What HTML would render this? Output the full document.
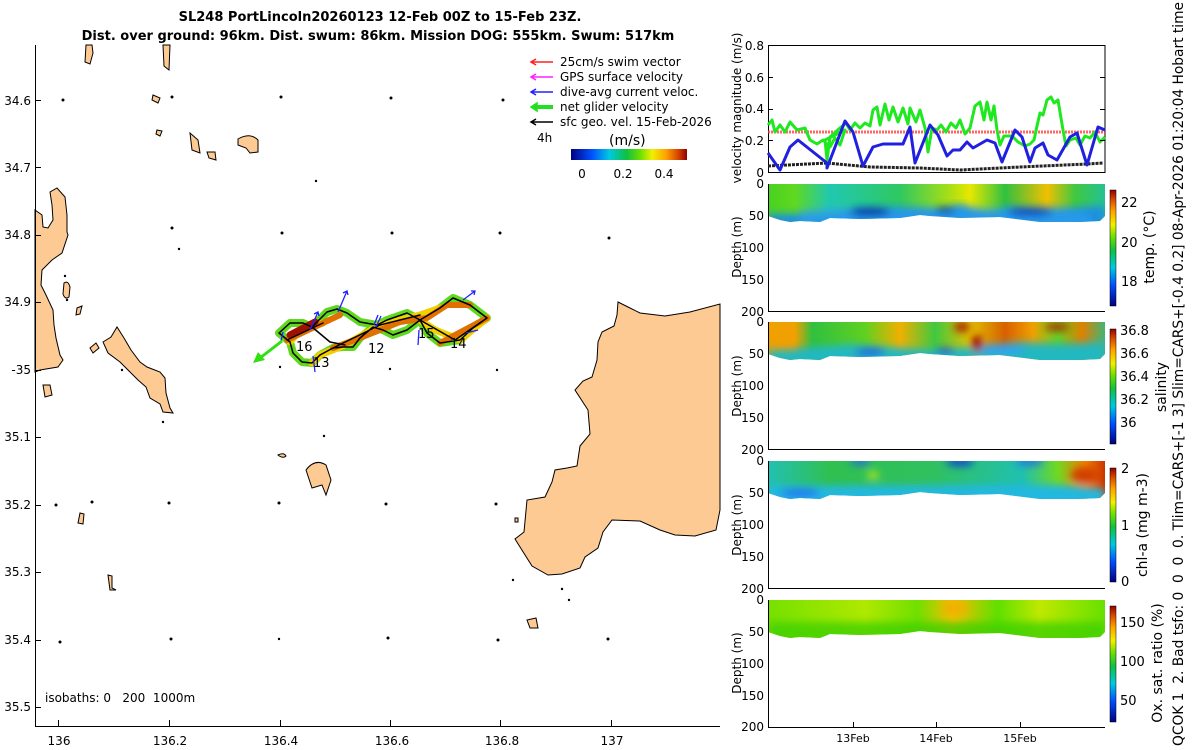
<!DOCTYPE html>
<html><head><meta charset="utf-8"><style>
html,body{margin:0;padding:0;background:#fff;}
svg{display:block;font-family:"DejaVu Sans","Liberation Sans",sans-serif;}
</style></head><body>
<svg width="1200" height="750" viewBox="0 0 1200 750" xmlns="http://www.w3.org/2000/svg">
<defs>
<linearGradient id="jet" x1="0" y1="0" x2="1" y2="0">
<stop offset="0" stop-color="#000080"/><stop offset="0.18" stop-color="#0050ff"/><stop offset="0.33" stop-color="#00c8e0"/><stop offset="0.48" stop-color="#10c040"/><stop offset="0.6" stop-color="#70e000"/><stop offset="0.7" stop-color="#f0f000"/><stop offset="0.82" stop-color="#ffa000"/><stop offset="0.92" stop-color="#d84800"/><stop offset="1" stop-color="#900000"/>
</linearGradient>
<linearGradient id="jetv" x1="0" y1="1" x2="0" y2="0">
<stop offset="0" stop-color="#000080"/><stop offset="0.18" stop-color="#0050ff"/><stop offset="0.33" stop-color="#00c8e0"/><stop offset="0.48" stop-color="#10c040"/><stop offset="0.6" stop-color="#70e000"/><stop offset="0.7" stop-color="#f0f000"/><stop offset="0.82" stop-color="#ffa000"/><stop offset="0.92" stop-color="#d84800"/><stop offset="1" stop-color="#900000"/>
</linearGradient>
<filter id="bl" x="-5%" y="-20%" width="110%" height="140%"><feGaussianBlur stdDeviation="4"/></filter>
<linearGradient id="tT" x1="0" x2="1"><stop offset="0" stop-color="#40d020"/><stop offset="0.1" stop-color="#60d820"/><stop offset="0.2" stop-color="#20c8b0"/><stop offset="0.4" stop-color="#30c860"/><stop offset="0.55" stop-color="#b0e010"/><stop offset="0.6" stop-color="#e8e800"/><stop offset="0.7" stop-color="#30c040"/><stop offset="0.82" stop-color="#f0c000"/><stop offset="0.9" stop-color="#40c840"/><stop offset="1" stop-color="#20c0a0"/></linearGradient>
<linearGradient id="tS" x1="0" x2="1"><stop offset="0" stop-color="#f0a000"/><stop offset="0.1" stop-color="#f0a000"/><stop offset="0.15" stop-color="#30c040"/><stop offset="0.3" stop-color="#60d020"/><stop offset="0.4" stop-color="#f0b000"/><stop offset="0.5" stop-color="#40c840"/><stop offset="0.6" stop-color="#e0c000"/><stop offset="0.7" stop-color="#d86000"/><stop offset="0.78" stop-color="#f0a000"/><stop offset="0.85" stop-color="#60d020"/><stop offset="0.92" stop-color="#e08000"/><stop offset="1" stop-color="#20c090"/></linearGradient>
<linearGradient id="tC" x1="0" x2="1"><stop offset="0" stop-color="#20c0c0"/><stop offset="0.2" stop-color="#30c050"/><stop offset="0.5" stop-color="#30c060"/><stop offset="0.75" stop-color="#20c0b0"/><stop offset="0.85" stop-color="#70d820"/><stop offset="0.93" stop-color="#f08000"/><stop offset="1" stop-color="#c02000"/></linearGradient>
<linearGradient id="tO" x1="0" x2="1"><stop offset="0" stop-color="#70e000"/><stop offset="0.3" stop-color="#b0e800"/><stop offset="0.45" stop-color="#70e000"/><stop offset="0.55" stop-color="#f0c000"/><stop offset="0.68" stop-color="#60e000"/><stop offset="0.8" stop-color="#c0e800"/><stop offset="1" stop-color="#60e000"/></linearGradient>
<clipPath id="c1"><path d="M768,0 L1105,0 L1105,32 L1100,37 L1080,38 L1040,38 L1000,33 L960,34 L930,32 L920,31 L900,34 L860,35 L830,34 L820,38 L800,37 L790,38 L780,36 L768,32 Z"/></clipPath>
</defs>

<text x="380" y="21" font-size="13" font-weight="bold" text-anchor="middle">SL248 PortLincoln20260123 12-Feb 00Z to 15-Feb 23Z.</text>
<text x="378" y="40" font-size="13" font-weight="bold" text-anchor="middle">Dist. over ground: 96km. Dist. swum: 86km. Mission DOG: 555km. Swum: 517km</text>

<g fill="#fdca94" stroke="#000" stroke-width="1">
<path d="M618,302 L630,308 L640,313 L665,316 L690,312 L720,304 L720,510 L716,530 L695,536 L675,535 L660,530 L640,521 L612,520 L603,532 L598,548 L585,557 L580,568 L562,574 L548,575 L532,566 L515,539 L524,532 L527,500 L545,497 L552,482 L555,470 L567,468 L577,466 L580,446 L590,434 L588,410 L575,390 L583,381 L592,377 L597,360 L598,342 L602,332 L614,326 L617,315 Z"/>
<path d="M35,210 L42,215 L43,227 L48,228 L53,220 L52,205 L50,192 L57,188 L65,197 L67,215 L67,232 L68,235 L62,253 L52,260 L42,270 L41,285 L46,295 L53,310 L54,325 L56,338 L60,355 L63,360 L58,367 L40,370 L35,372 Z"/>
<path d="M103,342 L111,337 L117,327 L124,338 L131,350 L140,362 L147,367 L160,372 L165,378 L166,393 L170,408 L173,413 L163,412 L160,404 L150,398 L146,387 L138,380 L130,372 L120,362 L108,353 Z"/>
<path d="M64,283 Q68,280 70,287 L69,297 Q65,300 63,294 Z"/>
<path d="M77,308 L82,306 L80,314 L76,315 Z"/>
<path d="M90,348 L96,343 L99,348 L93,353 Z"/>
<path d="M43,385 L50,385 L52,395 L45,397 Z"/>
<path d="M306,470 Q315,458 326,465 L331,480 L326,495 L322,485 L312,488 Z"/>
<path d="M80,513 L84,514 L83,524 L78,523 Z"/>
<path d="M108,575 L112,576 L112,588 L116,590 L110,590 Z"/>
<path d="M278,455 Q284,452 286,456 Q283,459 278,455 Z"/>
<path d="M527,620 L536,618 L538,628 L530,628 Z"/>
<path d="M515,518 L518,518 L518,522 L515,522 Z"/>
<path d="M86,45 L92,45 L93,53 L90,64 L85,62 Z"/>
<path d="M163,45 L170,45 L169,70 L164,66 Z"/>
<path d="M190,133 L198,140 L200,153 L192,150 Z"/>
<path d="M238,139 Q250,132 258,140 L258,152 L250,153 L246,148 L238,145 Z"/>
<path d="M207,152 L215,152 L216,160 L209,158 Z"/>
<path d="M153,95 L160,98 L158,103 L152,100 Z"/>
<path d="M157,130 L162,131 L160,136 L156,134 Z"/>
</g>
<g fill="#000">
<circle cx="63" cy="100" r="1.5"/><circle cx="172" cy="97" r="1.5"/><circle cx="281" cy="97" r="1.5"/><circle cx="391" cy="98" r="1.5"/><circle cx="503" cy="100" r="1.5"/><circle cx="316" cy="181" r="1.2"/><circle cx="172" cy="228" r="1.5"/><circle cx="179" cy="249" r="1.2"/><circle cx="282" cy="233" r="1.5"/><circle cx="392" cy="233" r="1.5"/><circle cx="500" cy="233" r="1.5"/><circle cx="609" cy="238" r="1.5"/><circle cx="65" cy="276" r="1.2"/><circle cx="67" cy="300" r="1.2"/><circle cx="122" cy="370" r="1.2"/><circle cx="163" cy="422" r="1.2"/><circle cx="92" cy="502" r="1.5"/><circle cx="56" cy="505" r="1.5"/><circle cx="169" cy="503" r="1.5"/><circle cx="279" cy="503" r="1.5"/><circle cx="386" cy="504" r="1.5"/><circle cx="496" cy="504" r="1.5"/><circle cx="60" cy="642" r="1.5"/><circle cx="171" cy="639" r="1.5"/><circle cx="279" cy="639" r="1.2"/><circle cx="388" cy="638" r="1.5"/><circle cx="498" cy="640" r="1.5"/><circle cx="608" cy="639" r="1.5"/><circle cx="562" cy="589" r="1.2"/><circle cx="569" cy="600" r="1.2"/><circle cx="513" cy="580" r="1.2"/><circle cx="324" cy="436" r="1.2"/><circle cx="280" cy="367" r="1.2"/><circle cx="390" cy="369" r="1.2"/><circle cx="497" cy="370" r="1.2"/>
</g>

<g fill="none" stroke-linejoin="round" stroke-linecap="round">
<path d="M279,333 L290,323 L303,323 L312,327 L327,312 L337,309 L347,313 L360,322 L377,325 L387,320 L407,313 L420,320 L440,308 L453,298 L470,305 L487,318 L473,328 L460,340 L440,343 L427,333 L420,320 L407,330 L393,335 L383,330 L373,327 L360,338 L353,347 L343,347 L333,348 L320,355 L312,363 L302,362 L293,353 L290,342 L279,333" stroke="#60d820" stroke-width="8"/>
<path d="M290,342 L300,330 L323,323 M312,363 L320,355 L345,345 L380,325 L420,315 L440,308 M420,320 L435,330 L460,340 L487,318" stroke="#f0d000" stroke-width="7"/>
<path d="M287,340 L323,323 L340,315 M333,348 L360,338 L400,322 L427,318 L447,305 L470,305 M440,343 L487,318" stroke="#e07000" stroke-width="6"/>
<path d="M290,335 L315,322" stroke="#a01000" stroke-width="7"/>
<path d="M279,333 L290,323 L303,323 L312,327 L327,312 L337,309 L347,313 L360,322 L377,325 L387,320 L407,313 L420,320 L440,308 L453,298 L470,305 L487,318 L473,328 L460,340 L440,343 L427,333 L420,320 L407,330 L393,335 L383,330 L373,327 L360,338 L353,347 L343,347 L333,348 L320,355 L312,363 L302,362 L293,353 L290,342 L279,333 M287,340 L323,323 M312,327 L330,342 L345,345 M333,348 L380,325 L420,315 M420,320 L455,340 L487,318" stroke="#000" stroke-width="1.5"/>
</g>
<g stroke="#2020ff" stroke-width="1.3" fill="none">
<path d="M310,330 L318,312 M314,314 L318,312 L319,316"/><path d="M338,312 L347,291 M343,293 L347,291 L348,295"/><path d="M313,356 L315,372"/><path d="M374,325 L378,315"/><path d="M376,327 L381,316"/><path d="M463,300 L475,291 M471,291 L475,291 L474,295"/><path d="M466,333 L478,330"/><path d="M419,330 L418,345"/><path d="M283,332 L281,341"/>
</g>
<path d="M282,341 L260,358" stroke="#30e010" stroke-width="3"/>
<path d="M253,363 L258,352 L265,360 Z" fill="#30e010"/>
<g font-size="13" fill="#000">
<text x="296" y="351">16</text><text x="313" y="367">13</text><text x="368" y="353">12</text><text x="418" y="338">15</text><text x="450" y="348">14</text>
</g>

<g stroke-width="1.5" fill="none">
<path d="M531,62 L553,62 M536,59 L531,62 L536,65" stroke="#ff2020"/>
<path d="M531,77 L553,77 M536,74 L531,77 L536,80" stroke="#ff20ff"/>
<path d="M531,92 L553,92 M536,89 L531,92 L536,95" stroke="#2020ff"/>
<path d="M533,107 L553,107" stroke="#20e020" stroke-width="4"/>
<path d="M531,107 L537,103 L537,111 Z" fill="#20e020" stroke="#20e020"/>
<path d="M531,122 L553,122 M536,119 L531,122 L536,125" stroke="#000"/>
</g>
<g font-size="12">
<text x="560" y="66">25cm/s swim vector</text><text x="560" y="81">GPS surface velocity</text><text x="560" y="96">dive-avg current veloc.</text><text x="560" y="111">net glider velocity</text><text x="560" y="126">sfc geo. vel. 15-Feb-2026</text>
<text x="537" y="142">4h</text>
</g>
<text x="609" y="145" font-size="14">(m/s)</text>
<rect x="571" y="149" width="116" height="11" fill="url(#jet)"/>
<g font-size="12" text-anchor="middle"><text x="582" y="178">0</text><text x="623" y="178">0.2</text><text x="664" y="178">0.4</text></g>

<path d="M35.5,45 L35.5,726.5 L720,726.5" fill="none" stroke="#000" stroke-width="1"/>
<g stroke="#000">
<path d="M35,100.5h6M35,167.5h6M35,235.5h6M35,302.5h6M35,370.5h6M35,437.5h6M35,505.5h6M35,572.5h6M35,640.5h6M35,707.5h6"/>
<path d="M58.5,726v-6M169.5,726v-6M280.5,726v-6M390.5,726v-6M500.5,726v-6M611.5,726v-6"/>
</g>
<g font-size="12" text-anchor="end">
<text x="31" y="105">34.6</text><text x="31" y="172">34.7</text><text x="31" y="239">34.8</text><text x="31" y="306">34.9</text><text x="31" y="374">-35</text><text x="31" y="441">35.1</text><text x="31" y="509">35.2</text><text x="31" y="576">35.3</text><text x="31" y="644">35.4</text><text x="31" y="711">35.5</text>
</g>
<g font-size="12" text-anchor="middle">
<text x="59" y="745">136</text><text x="170" y="745">136.2</text><text x="281" y="745">136.4</text><text x="392" y="745">136.6</text><text x="502" y="745">136.8</text><text x="612" y="745">137</text>
</g>
<text x="45" y="702" font-size="12" xml:space="preserve">isobaths: 0   200  1000m</text>

<rect x="768.5" y="45.5" width="336.5" height="127" fill="none" stroke="#000"/>
<path d="M768,132 L1105,132" stroke="#ff4040" stroke-width="3" stroke-dasharray="2,1" opacity="0.8"/>
<polyline fill="none" stroke="#222" stroke-width="3" stroke-dasharray="3,1" points="768,166 827,163 870,167 920,168 960,170 1020,167 1087,164 1103,163"/>
<polyline fill="none" stroke="#20e820" stroke-width="3" stroke-linejoin="round" points="768,125 772,120 775,132 780,125 785,132 790,122 797,130 805,128 810,140 817,144 823,140 830,147 835,138 840,145 845,130 825,140 827,160 830,137 840,128 846,123 850,130 855,123 860,128 865,123 870,126 873,110 877,107 880,125 885,104 889,120 893,107 898,122 903,108 908,124 910,108 916,122 920,110 925,128 928,152 932,128 937,130 941,125 946,132 951,123 956,128 960,120 965,134 970,128 975,106 980,102 984,120 987,102 991,120 994,106 997,130 1000,145 1004,136 1012,136 1018,142 1025,146 1030,144 1034,140 1037,126 1040,113 1043,115 1047,100 1051,97 1054,103 1058,100 1063,130 1066,146 1070,140 1076,138 1080,145 1085,136 1090,138 1095,132 1100,142 1105,137"/>
<polyline fill="none" stroke="#2020e0" stroke-width="3" stroke-linejoin="round" points="768,153 780,170 790,147 798,140 827,163 827,168 845,121 853,132 863,166 873,147 883,144 903,144 910,127 915,163 930,125 938,135 947,156 953,150 960,150 967,142 973,148 987,140 995,143 1002,162 1015,130 1022,137 1030,162 1035,148 1043,143 1048,155 1057,160 1070,137 1077,133 1087,165 1098,127 1105,130"/>
<g stroke="#000"><path d="M768,45.5h5M768,77.5h5M768,109.5h5M768,140.5h5M1105,45.5h-5M1105,77.5h-5M1105,109.5h-5M1105,140.5h-5"/></g>
<g font-size="12" text-anchor="end"><text x="764" y="50">0.8</text><text x="764" y="82">0.6</text><text x="764" y="113">0.4</text><text x="764" y="145">0.2</text><text x="764" y="177">0</text></g>
<text transform="translate(741,108) rotate(-90)" font-size="12" text-anchor="middle">velocity magnitude (m/s)</text>

<g transform="translate(0,184)">
<g clip-path="url(#c1)"><rect x="760" y="-4" width="350" height="50" fill="url(#tT)"/>
<g filter="url(#bl)"><path d="M768,30 L830,30 L860,22 L940,24 L960,20 L990,28 L1010,22 L1060,24 L1105,22 L1105,45 L768,45 Z" fill="#1a90e0"/><path d="M800,26 L830,24 L860,25 L900,26 L1000,24 L1040,26 L1070,26 L1090,30 L1090,45 L800,45Z" fill="#30a0f0" opacity="0.6"/><ellipse cx="870" cy="28" rx="20" ry="4" fill="#0028a0"/><ellipse cx="1030" cy="28" rx="22" ry="4" fill="#1040c0"/><ellipse cx="945" cy="26" rx="10" ry="3" fill="#0030b0"/></g></g>
<path d="M768.5,0 V127.5 H1105" fill="none" stroke="#000"/>
</g>
<g transform="translate(0,322)">
<g clip-path="url(#c1)"><rect x="760" y="-4" width="350" height="50" fill="url(#tS)"/>
<g filter="url(#bl)"><path d="M768,28 L790,28 L800,26 L850,22 L880,24 L900,26 L940,28 L980,24 L1020,20 L1060,22 L1105,20 L1105,45 L768,45 Z" fill="#20b8c0"/><ellipse cx="870" cy="30" rx="15" ry="4" fill="#2060e0"/><ellipse cx="945" cy="29" rx="10" ry="3" fill="#2050e0"/><ellipse cx="1000" cy="27" rx="25" ry="5" fill="#30a0f0"/><ellipse cx="977" cy="22" rx="6" ry="8" fill="#a00000"/><ellipse cx="962" cy="5" rx="8" ry="5" fill="#b02000"/><ellipse cx="1057" cy="5" rx="12" ry="4" fill="#b03000"/></g></g>
<path d="M768.5,0 V127.5 H1105" fill="none" stroke="#000"/>
</g>
<g transform="translate(0,461)">
<g clip-path="url(#c1)"><rect x="760" y="-4" width="350" height="50" fill="url(#tC)"/>
<g filter="url(#bl)"><path d="M768,25 L1060,24 L1105,28 L1105,45 L768,45 Z" fill="#20b8e0"/><ellipse cx="800" cy="32" rx="20" ry="4" fill="#2070f0"/><ellipse cx="960" cy="1" rx="14" ry="4" fill="#1040d0"/><ellipse cx="1030" cy="1" rx="14" ry="3" fill="#2060f0"/><ellipse cx="860" cy="1" rx="10" ry="3" fill="#2060f0"/><ellipse cx="1085" cy="14" rx="14" ry="8" fill="#d04000"/><ellipse cx="873" cy="14" rx="6" ry="3" fill="#d0f000"/></g></g>
<path d="M768.5,0 V127.5 H1105" fill="none" stroke="#000"/>
</g>
<g transform="translate(0,600)">
<g clip-path="url(#c1)"><rect x="760" y="-4" width="350" height="50" fill="url(#tO)"/>
<g filter="url(#bl)"><path d="M768,22 L1105,22 L1105,45 L768,45 Z" fill="#40d000" opacity="0.8"/><ellipse cx="955" cy="8" rx="14" ry="7" fill="#f0b000"/></g></g>
<path d="M768.5,0 V127.5 H1105" fill="none" stroke="#000"/>
</g>
<g font-size="12" text-anchor="end">
<text x="764" y="188">0</text><text x="764" y="220">50</text><text x="764" y="252">100</text><text x="764" y="284">150</text><text x="764" y="316">200</text>
<text x="764" y="326">0</text><text x="764" y="358">50</text><text x="764" y="390">100</text><text x="764" y="422">150</text><text x="764" y="454">200</text>
<text x="764" y="465">0</text><text x="764" y="497">50</text><text x="764" y="529">100</text><text x="764" y="561">150</text><text x="764" y="593">200</text>
<text x="764" y="604">0</text><text x="764" y="636">50</text><text x="764" y="668">100</text><text x="764" y="700">150</text><text x="764" y="731">200</text>
</g>
<g font-size="12" text-anchor="middle">
<text transform="translate(741,247) rotate(-90)">Depth (m)</text><text transform="translate(741,386) rotate(-90)">Depth (m)</text><text transform="translate(741,525) rotate(-90)">Depth (m)</text><text transform="translate(741,663) rotate(-90)">Depth (m)</text>
</g>
<g stroke="#000"><path d="M853.5,727v-5M936.5,727v-5M1020.5,727v-5"/></g>
<g font-size="11" text-anchor="middle"><text x="853" y="742">13Feb</text><text x="936" y="742">14Feb</text><text x="1020" y="742">15Feb</text></g>

<rect x="1110" y="190" width="6" height="116" fill="url(#jetv)" stroke="#000" stroke-width="0.5"/>
<rect x="1110" y="329" width="6" height="115" fill="url(#jetv)" stroke="#000" stroke-width="0.5"/>
<rect x="1110" y="468" width="6" height="114" fill="url(#jetv)" stroke="#000" stroke-width="0.5"/>
<rect x="1110" y="606" width="6" height="116" fill="url(#jetv)" stroke="#000" stroke-width="0.5"/>
<g font-size="13">
<text x="1121" y="207">22</text><text x="1121" y="247">20</text><text x="1121" y="286">18</text>
<text x="1120" y="335">36.8</text><text x="1120" y="358">36.6</text><text x="1120" y="381">36.4</text><text x="1120" y="404">36.2</text><text x="1120" y="427">36</text>
<text x="1121" y="473">2</text><text x="1121" y="530">1</text><text x="1121" y="586">0</text>
<text x="1120" y="627">150</text><text x="1120" y="666">100</text><text x="1120" y="705">50</text>
</g>
<g font-size="14" text-anchor="middle">
<text transform="translate(1154,247) rotate(-90)">temp. (°C)</text>
<text transform="translate(1166,387) rotate(-90)">salinity</text>
<text transform="translate(1147,525) rotate(-90)">chl-a (mg m-3)</text>
<text transform="translate(1162,663) rotate(-90)">Ox. sat. ratio (%)</text>
</g>
<text transform="translate(1183,746) rotate(-90)" font-size="14" textLength="744" lengthAdjust="spacingAndGlyphs" xml:space="preserve">QCOK 1  2. Bad tsfo: 0  0  0  0. Tlim=CARS+[-1 3] Slim=CARS+[-0.4 0.2] 08-Apr-2026 01:20:04 Hobart time</text>
</svg>
</body></html>
